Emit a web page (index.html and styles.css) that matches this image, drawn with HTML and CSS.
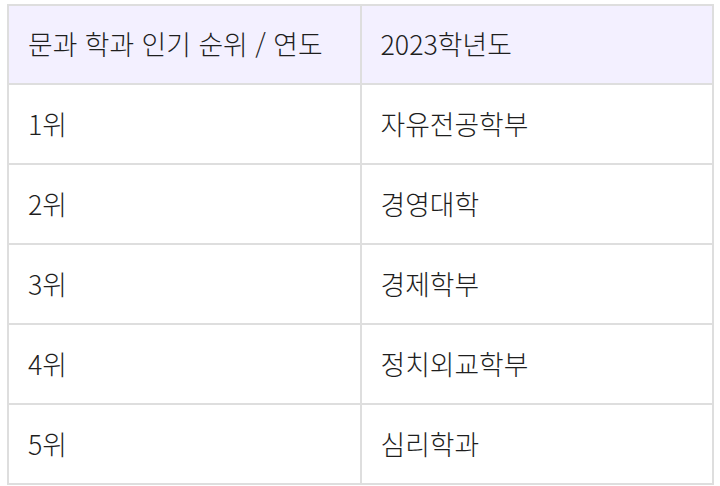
FILE: index.html
```html
<!DOCTYPE html>
<html lang="ko">
<head>
<meta charset="utf-8">
<link rel="stylesheet" href="styles.css">
</head>
<body>
<table class="rank">
  <thead>
    <tr><th>문과 학과 인기 순위 / 연도</th><th>2023학년도</th></tr>
  </thead>
  <tbody>
    <tr><td>1위</td><td>자유전공학부</td></tr>
    <tr><td>2위</td><td>경영대학</td></tr>
    <tr><td>3위</td><td>경제학부</td></tr>
    <tr><td>4위</td><td>정치외교학부</td></tr>
    <tr><td>5위</td><td>심리학과</td></tr>
  </tbody>
</table>
</body>
</html>
```
FILE: styles.css
```css
html, body { margin: 0; padding: 0; background: #fff; }
body { padding: 4px 0 0 7px; }
.rank {
  border-collapse: collapse;
  width: 707px;
  table-layout: fixed;
  font-family: "Noto Sans CJK KR", "Noto Sans", sans-serif;
  font-size: 26.8px;
  color: #1e1e1e;
}
.rank th, .rank td {
  border: 2px solid #dedede;
  height: 76px;
  padding: 0 0 2px 19px;
  text-align: left;
  font-weight: 300;
  vertical-align: middle;
}
.rank th { background: #f3f0ff; height: 75px; }
```
